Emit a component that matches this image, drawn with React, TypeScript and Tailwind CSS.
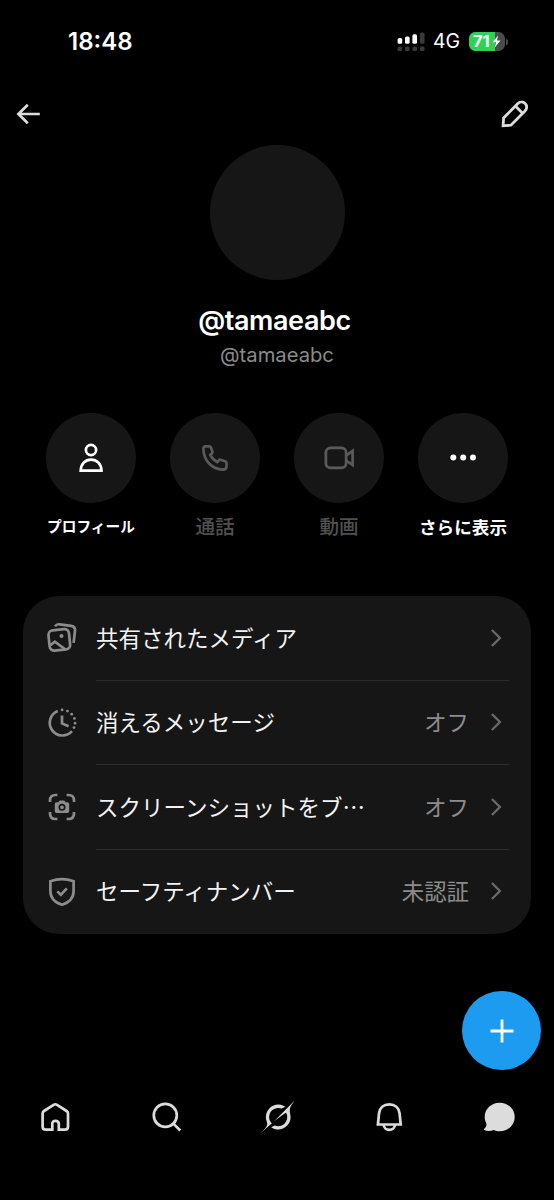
import React from 'react';

const StatusBar = () => (
  <div className="flex h-[83px] shrink-0 items-center justify-between pl-[68px] pr-[46px] text-white">
    <span className="pt-px text-[24px] font-semibold leading-none">18:48</span>
    <div className="flex items-center">
      <svg className="mr-[8px]" width="28" height="20" viewBox="0 0 28 20">
        <g fill="#fff">
          <rect x="0.6" y="6" width="4.6" height="5.8" rx="1.5" />
          <rect x="8" y="4.4" width="4.6" height="7.4" rx="1.5" />
          <rect x="15.4" y="2.2" width="4.6" height="9.6" rx="1.5" />
        </g>
        <g fill="#3a3a3a">
          <rect x="22.9" y="0.4" width="4.6" height="11.4" rx="1.5" />
          <rect x="0.6" y="14.4" width="4.6" height="4.6" rx="1.5" />
          <rect x="8" y="14.4" width="4.6" height="4.6" rx="1.5" />
          <rect x="15.4" y="14.4" width="4.6" height="4.6" rx="1.5" />
          <rect x="22.9" y="14.4" width="4.6" height="4.6" rx="1.5" />
        </g>
      </svg>
      <span className="mr-[9px] w-[27px] pt-px text-[19.5px] leading-none">4G</span>
      <div className="relative flex h-[19px] w-[36px] items-center overflow-hidden rounded-[6.5px] bg-[#4b4b4d]">
        <div className="absolute inset-y-0 left-0 w-[26px] bg-[#30d158]" />
        <span className="relative w-[22px] pl-[4px] text-[16.5px] font-bold leading-none">71</span>
        <svg className="relative ml-px" width="9" height="13" viewBox="0 0 9 13">
          <path d="M6 0.5 L0.6 7.2 H4 L2.8 12.5 L8.5 5.5 H5 Z" fill="#fff" />
        </svg>
      </div>
      <div className="ml-[1px] h-[6px] w-[2px] rounded-r-full bg-[#4b4b4d]" />
    </div>
  </div>
);

const Header = () => (
  <div className="flex h-[62px] shrink-0 items-center justify-between pl-[15px] pr-[25px]">
    <svg width="28" height="28" viewBox="0 0 28 28" fill="none" stroke="#dcdcdc" strokeWidth="2.7">
      <path d="M24.8 14 H3.2 M12.8 4.8 L3.4 14 L12.8 23.2" />
    </svg>
    <svg width="28" height="28" viewBox="0 0 28 28" fill="none" stroke="#dcdcdc" strokeWidth="2.8">
      <path d="M2.1 25.8 L2.6 17.9 L16.6 3.7 C18.8 1.5 22 1.5 24.1 3.5 C26.2 5.5 26.2 8.7 24 10.9 L9.9 25.2 Z" />
      <path d="M14.4 6.1 L21.6 13.2" />
    </svg>
  </div>
);

const actions = [
  {
    label: 'プロフィール',
    labelClass: 'text-[14.7px] font-bold text-white',
    iconClass: 'text-white',
    icon: (
      <>
        <circle cx="16" cy="8" r="5.1" />
        <path d="M5.7 28.7 H26.5 C26.3 21.9 22 17.6 16.1 17.6 S5.9 21.9 5.7 28.7 Z" />
      </>
    ),
  },
  {
    label: '通話',
    labelClass: 'pt-[2px] text-[19.6px] font-medium text-[#505050]',
    iconClass: 'text-[#5a5a5a]',
    icon: (
      <path
        transform="translate(2 2.2)"
        d="M4.5 2.2 H8.5 Q9.4 2.2 9.8 3.1 L11.4 7.4 Q11.7 8.3 11 9 L9.3 10.7 Q11.5 15.3 16.3 17.8 L18 16 Q18.7 15.3 19.6 15.6 L24.5 17.3 Q25.5 17.7 25.5 18.7 V22.3 Q25.5 25.4 22 25.4 C10.5 24.8 3 16.5 2.4 5 Q2.3 2.2 4.5 2.2 Z"
      />
    ),
  },
  {
    label: '動画',
    labelClass: 'pt-[2px] text-[19.6px] font-medium text-[#505050]',
    iconClass: 'text-[#5a5a5a]',
    icon: (
      <>
        <rect x="2.9" y="5.9" width="20.2" height="20" rx="4.6" />
        <path d="M23.3 13.3 L29.6 8.8 V23 L23.3 18.6" />
      </>
    ),
  },
  {
    label: 'さらに表示',
    labelClass: 'pt-px text-[17.6px] font-bold text-white',
    iconClass: 'text-white',
    icon: (
      <g fill="currentColor" stroke="none">
        <circle cx="6.3" cy="15.6" r="3" />
        <circle cx="16.2" cy="15.6" r="3" />
        <circle cx="26" cy="15.6" r="3" />
      </g>
    ),
  },
];

const rows = [
  {
    label: '共有されたメディア',
    value: '',
    icon: (
      <>
        <rect x="3" y="7.7" width="20.6" height="20.4" rx="4.6" transform="rotate(-6 13.3 17.9)" />
        <path d="M9 4.4 Q10.5 1.9 13.5 2.3 L25.2 3.8 Q29.6 4.6 29 9 L27.6 20.8" />
        <circle cx="15.5" cy="14" r="2" fill="currentColor" stroke="none" />
        <path d="M3.6 23.8 L8.8 19.6 L18.8 27" />
      </>
    ),
  },
  {
    label: '消えるメッセージ',
    value: 'オフ',
    icon: (
      <>
        <path d="M11.8 4 A12.7 12.7 0 1 0 26 24.2" />
        <path d="M16 8.4 V16.4 L22.6 19.2" />
        <g fill="currentColor" stroke="none">
          <circle cx="16.1" cy="2.9" r="1.4" />
          <circle cx="21.4" cy="4.1" r="1.4" />
          <circle cx="25.7" cy="7.2" r="1.4" />
          <circle cx="28.4" cy="11.4" r="1.4" />
          <circle cx="29.1" cy="16.2" r="1.4" />
          <circle cx="28" cy="20.6" r="1.4" />
        </g>
      </>
    ),
  },
  {
    label: 'スクリーンショットをブ…',
    value: 'オフ',
    icon: (
      <>
        <path d="M4 11 V9.5 Q4 4 9.5 4 H11.4 M20.6 4 H22.5 Q28 4 28 9.5 V11 M28 21 V22.5 Q28 28 22.5 28 H20.6 M11.4 28 H9.5 Q4 28 4 22.5 V21" />
        <path
          d="M10.6 11.2 H12.4 L13.6 9.5 H18.4 L19.6 11.2 H21.4 Q23.2 11.2 23.2 13 V20.2 Q23.2 22 21.4 22 H10.6 Q8.8 22 8.8 20.2 V13 Q8.8 11.2 10.6 11.2 Z"
          fill="currentColor"
          stroke="none"
        />
        <circle cx="16" cy="16.3" r="2.7" stroke="#161616" strokeWidth="1.6" />
      </>
    ),
  },
  {
    label: 'セーフティナンバー',
    value: '未認証',
    icon: (
      <>
        <path d="M16 3.2 C20 3.2 24 4 27.6 5.3 V15 C27.6 22 23 26.6 16 28.8 C9 26.6 4.4 22 4.4 15 V5.3 C8 4 12 3.2 16 3.2 Z" />
        <path d="M11.3 15.4 L14.8 18.8 L20.8 12.4" />
      </>
    ),
  },
];

const tabs = [
  <path
    key="home"
    d="M13.3 28.7 H6.8 Q3.6 28.7 3.6 25.5 V12.6 Q3.6 10.9 5 10 L14.6 3.8 Q16.3 2.7 18 3.8 L27.6 10 Q29 10.9 29 12.6 V25.5 Q29 28.7 25.8 28.7 H19.8 V23 Q19.8 19.8 16.5 19.8 T13.3 23 Z"
  />,
  <g key="search">
    <circle cx="15.3" cy="14.4" r="11.5" />
    <path d="M23.3 22.6 L30.3 29.5" />
  </g>,
  <g key="grok" fill="currentColor" stroke="none" transform="translate(1.3 -0.2)">
    <path d="M12.745 20.54l10.97-8.19c.539-.4 1.307-.244 1.564.38 1.349 3.288.746 7.241-1.938 9.955-2.683 2.714-6.417 3.31-9.83 1.954l-3.728 1.745c5.347 3.697 11.84 2.782 15.898-1.324 3.219-3.255 4.216-7.692 3.284-11.693l.008.009c-1.351-5.878.332-8.227 3.782-13.031L33 0l-4.54 4.59v-.014L12.743 20.544m-2.263 1.987c-3.837-3.707-3.175-9.446.1-12.755 2.42-2.449 6.388-3.448 9.852-1.979l3.72-1.737c-.67-.49-1.53-1.017-2.515-1.387-4.455-1.854-9.789-.931-13.41 2.728-3.483 3.523-4.579 8.94-2.697 13.561 1.405 3.454-.899 5.898-3.22 8.364C1.49 30.2.666 31.074 0 32l10.478-9.466" />
  </g>,
  <g key="bell" transform="translate(2.2 0)">
    <path d="M4.7 23.5 L5.8 12.5 C6.4 6.8 10.5 3.4 16.1 3.4 S25.8 6.8 26.4 12.5 L27.5 23.5 Z" />
    <path d="M10.6 24 A5.5 4.9 0 0 0 21.6 24" />
  </g>,
  <path
    key="chat"
    fill="currentColor"
    stroke="none"
    transform="translate(0.7 0)"
    d="M17 1.8 C25.3 1.8 32 8 32 16 S25.3 30.3 17 30.3 C14.9 30.3 12.8 29.8 11 29 C8 30.4 4.2 30.5 1.6 29 C1 28.7 1.1 28 1.6 27.7 C3.4 26.5 4 24.5 3.6 22.3 C2.6 20.4 2 18.3 2 16 C2 8 8.7 1.8 17 1.8 Z"
  />,
];

const App = () => {
  return (
    <div className="relative flex h-[1200px] w-[554px] flex-col overflow-hidden bg-black font-['Inter','Noto_Sans_CJK_JP',sans-serif]">
      <StatusBar />
      <Header />

      {/* Profile */}
      <div className="flex flex-col items-center">
        <div className="h-[135px] w-[135px] rounded-full bg-[#161616]" />
        <h1 className="mt-[23px] pr-[5px] text-[27px] font-semibold leading-[36px] tracking-[-0.4px] text-white">@tamaeabc</h1>
        <p className="mt-[3px] text-[20.2px] leading-[26px] text-[#8a8a8a]">@tamaeabc</p>
      </div>

      {/* Actions */}
      <div className="mt-[45px] flex shrink-0 justify-between px-[29px]">
        {actions.map((action) => (
          <div key={action.label} className="flex w-[124px] shrink-0 flex-col items-center">
            <div className="flex h-[90px] w-[90px] items-center justify-center rounded-full bg-[#161616]">
              <svg className={action.iconClass} width="32" height="32" viewBox="0 0 32 32" fill="none" stroke="currentColor" strokeWidth="2.7">
                {action.icon}
              </svg>
            </div>
            <span className={`mt-[9px] flex h-[30px] items-center whitespace-nowrap leading-none ${action.labelClass}`}>
              {action.label}
            </span>
          </div>
        ))}
      </div>

      {/* Settings */}
      <div className="mx-[23px] mt-[54px] h-[338px] shrink-0 rounded-[36px] bg-[#161616] pl-[23px] pr-[22px]">
        {rows.map((row, index) => (
          <div key={row.label} className="flex h-[84.5px] items-center">
            <svg className="shrink-0 text-[#8c8c8c]" width="32" height="32" viewBox="0 0 32 32" fill="none" stroke="currentColor" strokeWidth="2.7">
              {row.icon}
            </svg>
            <div className={`ml-[18px] flex h-full flex-1 items-center border-b ${index < rows.length - 1 ? 'border-[#2b2b2b]' : 'border-transparent'}`}>
              <span className="flex-1 whitespace-nowrap pb-[2px] font-['Noto_Sans_CJK_JP',sans-serif] text-[22.5px] leading-none text-[#f2f2f2]">{row.label}</span>
              <span className="pt-[2px] text-[22.4px] leading-none text-[#8c8c8c]">{row.value}</span>
              <svg className="ml-[20px] mr-[6px]" width="14" height="20" viewBox="0 0 14 20" fill="none" stroke="#6a6a6a" strokeWidth="2.3">
                <path d="M2.9 2 L10.9 10 L2.9 18" />
              </svg>
            </div>
          </div>
        ))}
      </div>

      {/* Compose button floats over the page */}
      <button className="absolute left-[462px] top-[991px] flex h-[79px] w-[79px] items-center justify-center rounded-full bg-[#1d9bf0]">
        <svg width="24" height="24" viewBox="0 0 24 24" stroke="#fff" strokeWidth="2.8">
          <path d="M12 0.5 V23.5 M0.5 12 H23.5" />
        </svg>
      </button>

      <nav className="mt-auto grid h-[116px] shrink-0 grid-cols-5 pt-[17px] text-[#dcdcdc]">
        {tabs.map((tab) => (
          <svg key={tab.key} className="mx-auto overflow-visible" width="33" height="33" viewBox="0 0 33 33" fill="none" stroke="currentColor" strokeWidth="2.7">
            {tab}
          </svg>
        ))}
      </nav>
    </div>
  );
};

export default App;
